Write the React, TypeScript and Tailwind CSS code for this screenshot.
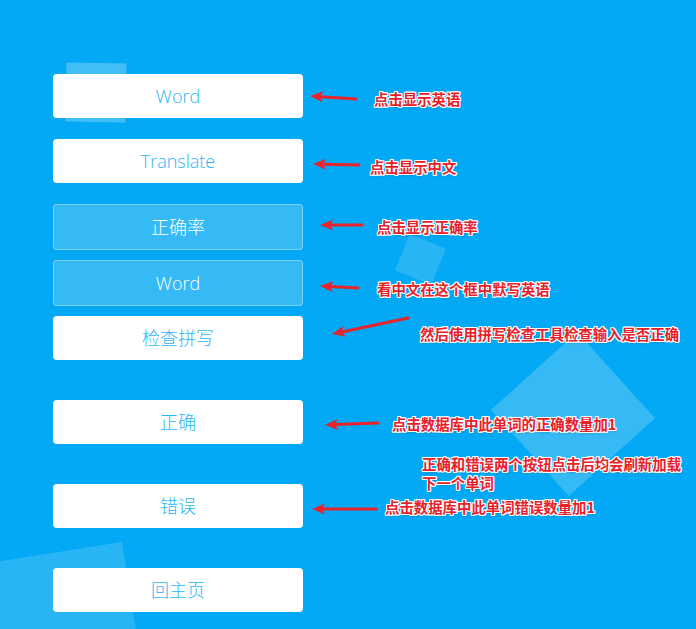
import React from "react";

type Arrow = { tip: [number, number]; tail: [number, number] };

const arrows: Arrow[] = [
  { tip: [310, 96], tail: [356, 99] },
  { tip: [313, 164], tail: [359, 165] },
  { tip: [320, 225], tail: [362, 225] },
  { tip: [320, 286], tail: [358, 288] },
  { tip: [332, 334], tail: [408, 318] },
  { tip: [325, 425], tail: [378, 423] },
  { tip: [312, 509], tail: [376, 509] },
];

function ArrowShape({ tip, tail }: Arrow) {
  const dx = tail[0] - tip[0];
  const dy = tail[1] - tip[1];
  const len = Math.hypot(dx, dy);
  const ux = dx / len;
  const uy = dy / len;
  const headLen = 13;
  const half = 5.5;
  const bx = tip[0] + ux * headLen;
  const by = tip[1] + uy * headLen;
  const p1 = `${bx - uy * half},${by + ux * half}`;
  const p2 = `${bx + uy * half},${by - ux * half}`;
  const notchX = tip[0] + ux * (headLen - 3);
  const notchY = tip[1] + uy * (headLen - 3);
  return (
    <g>
      <line
        x1={notchX}
        y1={notchY}
        x2={tail[0]}
        y2={tail[1]}
        stroke="#e8232b"
        strokeWidth={3}
        strokeLinecap="round"
      />
      <polygon points={`${tip[0]},${tip[1]} ${p1} ${notchX},${notchY} ${p2}`} fill="#e8232b" />
    </g>
  );
}

function Note({ className, children }: { className: string; children: React.ReactNode }) {
  return (
    <div
      className={`absolute whitespace-nowrap text-[14.4px] leading-[18px] font-bold text-[#e8202a] [font-family:'Noto_Sans_CJK_SC','Noto_Sans',sans-serif] [text-shadow:1px_0_0_#fff,-1px_0_0_#fff,0_1px_0_#fff,0_-1px_0_#fff,1px_1px_0_#fff,-1px_-1px_0_#fff,1px_-1px_0_#fff,-1px_1px_0_#fff,1px_2px_2px_rgba(0,0,0,0.15)] ${className}`}
    >
      {children}
    </div>
  );
}

function WhiteButton({ label }: { label: string }) {
  return (
    <button className="flex h-[44px] w-[250px] items-center justify-center rounded-[4px] bg-white text-[18px] font-light text-[#29b6f6]">
      {label}
    </button>
  );
}

function GlassButton({ label }: { label: string }) {
  return (
    <div className="flex h-[46px] w-[250px] items-center justify-center rounded-[4px] border border-white/35 bg-white/20 text-[18px] font-light text-white">
      {label}
    </div>
  );
}

export default function App() {
  return (
    <div className="relative h-[629px] w-[696px] overflow-hidden bg-[#03a9f4] [font-family:'Open_Sans','Noto_Sans_CJK_SC',sans-serif]">
      {/* background shapes */}
      <div className="absolute left-[66px] top-[63px] h-[59px] w-[60px] rotate-[1deg] bg-white/25" />
      <div className="absolute left-[401px] top-[240px] h-[39px] w-[39px] rotate-[22deg] bg-white/15" />
      <div className="absolute left-[515px] top-[356px] h-[116px] w-[116px] rotate-[48deg] bg-white/20" />
      <div className="absolute left-[-78px] top-[542px] h-[200px] w-[200px] origin-top-right -rotate-[9deg] bg-white/15" />

      <div className="relative flex flex-col gap-[40px] pl-[53px] pt-[74px]">
        <div className="flex flex-col gap-[10px]">
          <div className="flex flex-col gap-[21px]">
            <WhiteButton label="Word" />
            <WhiteButton label="Translate" />
            <GlassButton label="正确率" />
          </div>
          <GlassButton label="Word" />
          <WhiteButton label="检查拼写" />
        </div>
        <WhiteButton label="正确" />
        <WhiteButton label="错误" />
        <WhiteButton label="回主页" />
      </div>

      {/* annotation overlay */}
      <svg className="pointer-events-none absolute left-0 top-0" width={696} height={629}>
        {arrows.map((a, i) => (
          <ArrowShape key={i} {...a} />
        ))}
      </svg>

      <Note className="left-[374px] top-[90px]">点击显示英语</Note>
      <Note className="left-[370px] top-[158px]">点击显示中文</Note>
      <Note className="left-[377px] top-[218px]">点击显示正确率</Note>
      <Note className="left-[377px] top-[280px]">看中文在这个框中默写英语</Note>
      <Note className="left-[420px] top-[325px]">然后使用拼写检查工具检查输入是否正确</Note>
      <Note className="left-[392px] top-[415px]">点击数据库中此单词的正确数量加1</Note>
      <Note className="left-[422px] top-[454px] !leading-[19px]">
        正确和错误两个按钮点击后均会刷新加载
        <br />
        下一个单词
      </Note>
      <Note className="left-[385px] top-[498px]">点击数据库中此单词错误数量加1</Note>
    </div>
  );
}
